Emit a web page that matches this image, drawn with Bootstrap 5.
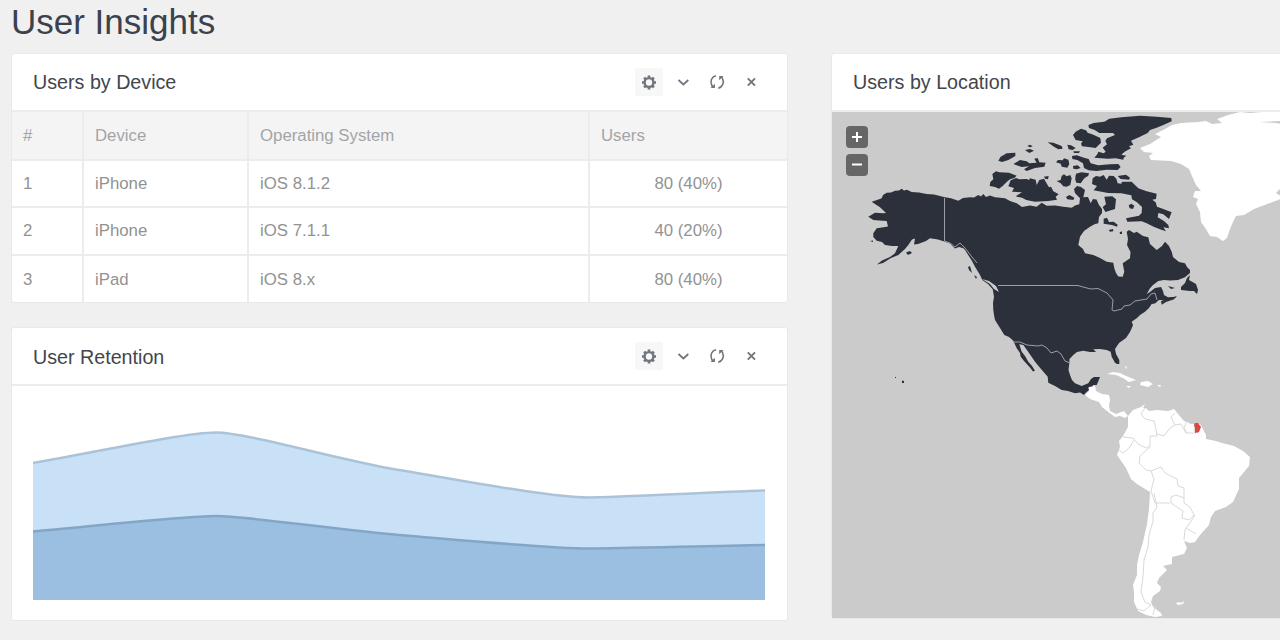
<!DOCTYPE html>
<html lang="en">
<head>
<meta charset="utf-8">
<meta name="viewport" content="width=device-width, initial-scale=1">
<title>User Insights</title>
<link href="https://cdn.jsdelivr.net/npm/bootstrap@5.3.0/dist/css/bootstrap.min.css" rel="stylesheet">
<style>
body{background:#f0f0f0;font-family:"Liberation Sans",Arial,sans-serif;color:#3d424b;height:640px;overflow:hidden}
.page-title{font-size:35px;line-height:42px;height:53px;margin:0;padding:1px 0 0 11px;font-weight:400;color:#3c424d}
.board{padding-left:11px;gap:43px}
.left-col{width:777px;gap:24px}
.right-col{width:449px}
.panel{--bs-card-border-color:#e9e9e9;--bs-card-border-radius:3px;--bs-card-inner-border-radius:2px;border-width:1px}
.panel-head{height:58px;padding:0 21px 0 21px;border-bottom:2px solid #ececec}
.panel-head h2{font-size:19.7px;margin:0;padding-top:2px;font-weight:400;color:#42464d}
.tools{gap:6px;padding-right:1px}
.tool{width:28px;height:28px;padding:0;color:#70757d;border:0;border-radius:2px;line-height:0}
.tool.on{background:#f7f7f8}
.devices{--bs-table-color:#929292;--bs-table-bg:transparent;table-layout:fixed;font-size:16.8px;line-height:22px;margin:0}
.devices th,.devices td{height:47.6px;padding:1px 11px 0;vertical-align:middle;border-style:solid;border-color:#ececec;border-width:0 2px 2px 0;font-weight:400}
.devices th{background:#f4f4f4;color:#a3a4a7}
.devices tr>:last-child{border-right:0}
.devices tbody tr:last-child td{border-bottom:0}
.chart-area{padding:15px 21px 20px;height:234px}
.map-area{background:#cbcbcb;height:506px;overflow:hidden}
.zoomers{position:absolute;left:14px;top:72px;gap:6px}
.zoomers button{width:22px;height:22px;padding:0;border:0;border-radius:4px;background:#666;line-height:0}
svg{display:block}
</style>
</head>
<body>
<h1 class="page-title">User Insights</h1>
<svg width="0" height="0" class="position-absolute">
<defs>
<symbol id="gear" viewBox="0 0 28 28"><circle cx="14" cy="14.5" r="4.4" fill="none" stroke="currentColor" stroke-width="2.4"/><g stroke="currentColor" stroke-width="2.7"><path d="M14 7.5v2.3M14 19.2v2.3M7 14.5h2.3M18.7 14.5H21M9.1 9.6l1.7 1.7M17.2 17.7l1.7 1.7M18.9 9.6l-1.7 1.7M10.8 17.7l-1.7 1.7"/></g></symbol>
<symbol id="chevron" viewBox="0 0 28 28"><path d="M9.500 12l4.900 4.500 4.900-4.500" fill="none" stroke="currentColor" stroke-width="1.700"/></symbol>
<symbol id="refresh" viewBox="0 0 28 28"><path d="M13 7.8C9 8.500 6.500 13 8.800 17.500l1.200 1.700M15.200 20.200c4-.9 6.500-5.500 4.200-9.900L18.200 8.600" fill="none" stroke="currentColor" stroke-width="1.600"/><path d="M7.600 19.900h4.300v-4.200zM20.500 8.100h-4.300v4.200z" fill="currentColor"/></symbol>
<symbol id="close" viewBox="0 0 28 28"><path d="M10.800 10.300l7.200 7.400M18 10.300l-7.200 7.400" fill="none" stroke="currentColor" stroke-width="1.900"/></symbol>
</defs>
</svg>
<main class="board d-flex align-items-start">
<div class="left-col d-flex flex-column flex-shrink-0">
<section class="card panel">
<div class="panel-head d-flex align-items-center justify-content-between">
<h2>Users by Device</h2>
<div class="tools d-flex">
<button class="btn tool on" aria-label="Settings"><svg width="28" height="28"><use href="#gear"/></svg></button>
<button class="btn tool" aria-label="Collapse"><svg width="28" height="28"><use href="#chevron"/></svg></button>
<button class="btn tool" aria-label="Refresh"><svg width="28" height="28"><use href="#refresh"/></svg></button>
<button class="btn tool" aria-label="Close"><svg width="28" height="28"><use href="#close"/></svg></button>
</div>
</div>
<table class="table devices">
<colgroup><col style="width:71px"><col style="width:165px"><col style="width:341px"><col></colgroup>
<thead><tr><th>#</th><th>Device</th><th>Operating System</th><th>Users</th></tr></thead>
<tbody>
<tr><td>1</td><td>iPhone</td><td>iOS 8.1.2</td><td class="text-center">80 (40%)</td></tr>
<tr><td>2</td><td>iPhone</td><td>iOS 7.1.1</td><td class="text-center">40 (20%)</td></tr>
<tr><td>3</td><td>iPad</td><td>iOS 8.x</td><td class="text-center">80 (40%)</td></tr>
</tbody>
</table>
</section>
<section class="card panel">
<div class="panel-head d-flex align-items-center justify-content-between">
<h2>User Retention</h2>
<div class="tools d-flex">
<button class="btn tool on" aria-label="Settings"><svg width="28" height="28"><use href="#gear"/></svg></button>
<button class="btn tool" aria-label="Collapse"><svg width="28" height="28"><use href="#chevron"/></svg></button>
<button class="btn tool" aria-label="Refresh"><svg width="28" height="28"><use href="#refresh"/></svg></button>
<button class="btn tool" aria-label="Close"><svg width="28" height="28"><use href="#close"/></svg></button>
</div>
</div>
<div class="chart-area">
<svg width="732" height="199" viewBox="33 401 732 199">
<path fill="#c9e1f7" d="M33 463C94 452.500 185 432 216 432C247 432 338 460 399 470C460 480 551 498 588 498C619 498 704 492.500 765 490.500V600H33Z"/>
<path fill="none" stroke="#acc3d7" stroke-width="2.500" d="M33 463C94 452.500 185 432.500 216 432.500C247 432.500 338 460 399 470C460 480 551 497.500 588 497.500C619 497.500 704 492.500 765 490.500"/>
<path fill="#9bbfe0" d="M33 531.500C94 526 185 516 216 516C247 516 338 530 399 535C460 540 551 548.500 588 548.500C619 548.500 704 546 765 545V600H33Z"/>
<path fill="none" stroke="#84a6c6" stroke-width="2.500" d="M33 531.500C94 526 185 516 216 516C247 516 338 530 399 535C460 540 551 548.500 588 548.500C619 548.500 704 546 765 545"/>
</svg>
</div>
</section>
</div>
<section class="card panel right-col flex-shrink-0 border-end-0 rounded-end-0">
<div class="panel-head d-flex align-items-center"><h2>Users by Location</h2></div>
<div class="zoomers d-flex flex-column">
<button class="btn" aria-label="Zoom in"><svg width="22" height="22"><path d="M6 11h10M11 6v10" stroke="#fff" stroke-width="2"/></svg></button>
<button class="btn" aria-label="Zoom out"><svg width="22" height="22"><path d="M6 10.500h10" stroke="#fff" stroke-width="2"/></svg></button>
</div>
<div class="map-area">
<svg width="448" height="506" viewBox="832 112 448 506">
<!-- North American mainland -->
<path fill="#2b303a" d="M871.700 201.700L877 200L881.700 198.300L883 195L886.700 192.700L891 192.500L895 190.700L899 190.500L901.700 188.700L904 190.500L907 189.700L911.700 192L919 192.500L926.700 194L934 194.500L945 197.300L951 198.200L958.300 200.700L963 198L970 197.300L974 197.500L978.300 195L981 196.500L983.300 194L986 197L990 195.500L995 197.300L1005 198.300L1010 201L1016.700 203.300L1022 207L1030 205.500L1036.700 206.700L1041.700 202.700L1046.700 205.700L1055 205.500L1063.300 206.700L1071.700 207.700L1075 205.500L1079.300 204.300L1080 198.300L1075 193L1074 189L1077 186L1081 187L1085 190L1083.300 197.300L1088 197L1090.700 203.300L1093 199L1096.500 199.500L1099 205L1102 209L1102 213L1099 217L1098.300 223.300L1095 224L1090 226.700L1084 231L1080 236.700L1078.300 245L1083 249L1085 253.300L1093.300 255L1100 258L1106.700 261.700L1113.300 262.700L1114.300 268.300L1116 273L1118.300 276.500L1122.700 276.700L1124.300 271.700L1122.700 263.300L1126 261L1130 258.300L1130.500 252L1127 245L1128 239L1126.700 231.700L1129 230L1134 233L1136.700 231.700L1143 236L1148.300 237.300L1150 244L1156.700 250L1162 246L1165 241.700L1169 246L1171.700 251.700L1173 257L1179 262L1185 263.300L1187 267L1190 270L1190 273L1185 277.300L1178 280L1170 280.500L1164 280L1158.300 281L1153 285L1150 288.300L1146.700 294L1150 292L1155 288L1161 287L1163 291L1164 295L1168 297.300L1176.700 296.700L1172 300L1166 302L1161.700 304.700L1161 301L1164 300L1159 300L1155 303.500L1151.700 304L1149 308L1145 311.700L1140 315L1137 318L1131.700 321.700L1133 325L1131.700 328.300L1130 332L1126 338L1119 343L1115 349L1116 354L1119.300 360L1119.300 364L1117 364L1115 362.700L1111.700 356.700L1110.700 351.700L1106.700 350L1100 349L1093.300 349.300L1096 352L1090 352L1083.300 350.700L1077 352L1073.300 355L1069.500 359L1069.300 363.300L1068.500 370L1070 375L1072 380L1075 383.300L1081.700 386L1088.300 383.300L1091 379L1094 377L1100 377L1098 382L1096.700 385L1093 385L1092 387.500L1088 387.500L1089 390L1085.500 393L1084 395L1080 392.500L1075 393.300L1068 391L1061.700 390L1055 386L1048.300 382.700L1047.700 376.700L1041 369L1035 361.700L1029 353L1023.300 345L1019.300 344.300L1021.700 351.700L1025 356L1028.300 361.700L1032 366L1035 370.700L1033 371.500L1030 367.500L1024 361L1020.700 356.700L1020 353L1016.700 348.300L1013.300 340.700L1009 337L1004.300 335L1000 328L995 320L994 315L993.300 310L993 303L994 296.700L992.700 289.300L988 284L982.300 280L980 275L975 266.700L972 261L965 250L963.300 248.300L959 247L955 248.500L950 243.500L945 241.700L938 239.500L930 238.300L926 241L918 244L914 244.500L915 238.500L912 239.500L908.300 245L905 249L898.300 255L891 258L883 263L877 264.500L882 260.500L890 257L895 253.300L898.300 246L892 246L885 245L882 242L876.700 240.700L873.300 237L873.300 233.300L876.700 228.300L882 227.500L888 226.500L886.700 221L879 220.500L873.300 220L868.300 216.700L875 212.700L883.300 213.300L886 213L880 207.300L875 204Z"/>
<!-- Arctic islands: enlarged 3x local units -->
<g fill="#2b303a" transform="translate(980 110) scale(.33333)">
<path d="M55 152L62 140L80 130L106 128L106 138L85 150L66 156ZM135 120L150 117L162 122L148 129ZM142 108L150 104L158 109L150 112ZM203 97L220 98L245 108L248 116L235 118L222 110ZM262 104L273 106L287 114L278 120L266 118ZM280 124L300 124L297 129L282 129ZM100 162L120 150L140 154L148 160L170 158L163 146L173 144L178 157L197 158L193 170L165 174L140 183L132 178L147 169L125 171ZM228 157L234 150L248 151L252 145L265 149L268 162L262 173L245 170L242 161ZM279 168L293 166L302 174L290 178L280 176ZM276 138L290 136L312 143L326 147L332 160L355 166L390 163L415 162L422 171L413 180L380 179L350 183L326 181L312 174L309 160L292 150L277 147Z"/>
<path d="M37 192L48 184L58 187L87 188L110 197L103 204L90 208L80 216L68 228L57 236L45 231L29 228L31 216L40 208ZM85 229L92 211L108 204L118 208L140 207L147 210L150 205L167 209L170 225L178 210L192 206L201 222L207 232L213 230L220 244L236 253L227 260L231 269L205 273L165 275L139 270L126 263L107 259L126 247L96 245L102 234ZM192 200L206 198L204 208L195 206ZM230 213L242 210L245 198L252 193L260 199L271 195L275 205L271 225L260 230L250 229L242 220ZM286 201L288 191L304 187L327 190L325 197L313 205L302 220L289 218L286 209ZM258 261L268 255L283 263L280 270L262 268Z"/>
<path d="M279 75L287 65L303 56L318 61L323 68L340 74L361 84L363 98L347 114L325 111L306 109L303 101L308 94L287 90ZM325 45L341 39L373 35L388 26L424 22L480 17L530 20L574 24L575 34L550 45L530 53L510 60L503 69L477 82L453 92L460 104L447 109L453 115L434 125L424 134L439 137L431 143L430 149L407 145L383 146L343 143L352 133L355 125L371 130L377 125L368 113L381 103L376 93L381 85L405 75L399 69L358 69L344 60L327 54Z"/>
<path d="M336 222L338 205L348 198L360 200L371 195L380 209L387 197L401 198L409 206L413 220L424 221L426 215L455 215L475 235L500 244L530 251L528 267L517 269L527 277L531 290L550 297L575 307L567 327L550 313L535 309L533 322L552 333L565 345L567 355L550 352L558 364L540 358L521 350L500 340L485 334L442 335L438 325L477 317L485 309L486 291L470 276L456 268L454 256L424 250L384 249L341 241L351 228ZM413 198L438 194L450 203L447 209L422 207ZM373 260L397 259L408 268L405 297L388 302L376 306L368 291L378 283ZM446 286L454 281L463 287L459 297L449 295ZM371 326L381 323L387 336L401 335L413 344L411 350L396 345L371 341ZM386 360L399 357L400 364L390 365ZM419 367L426 364L426 372L420 372Z"/>
</g>
<g fill="#2b303a">
<path d="M1169 302L1172 302M1190 275L1189 280L1196 284L1198 290L1197 294L1194 291L1190 291L1181 290L1181 287L1185 283L1187 278ZM1168 286L1175 288L1171 289ZM1171 298L1177 296L1173 300ZM906 252.500L910 251L912 253L908 255ZM870 241L873 240.500L873 242ZM968 267L970 266L972 273L969 270ZM974 275L977 277L976 279ZM902 380.500L904 381L904 383L902 383ZM895 377h1v1h-1z"/>
</g>
<!-- water inlets and international borders -->
<path fill="#cbcbcb" d="M982 279L989 281L996 286L999 292L994 289L990 284Z"/>
<g fill="none" stroke="#9b9ea3" stroke-width="1">
<path d="M944.500 198V241L950 243L955 247L960 243L965 248L972 257L977 263M998 285.500H1078L1083 287L1091 289L1098 288.500L1107 293L1113 300L1112 310L1114 311L1122 309L1124 306L1130 305L1135 301L1147 299L1151 294L1155 293L1157 300M1013.300 342L1020 342L1027 345L1038 346L1042 345L1047 348L1051 353L1057 351L1061 354L1065 361L1070 363"/>
</g>
<!-- Greenland -->
<path fill="#fff" d="M1140 148L1150 144L1161 137L1155 134L1165 129L1172 125L1181 123L1198 122L1206 121L1212 124L1222 123L1217 119L1228 115L1240 112H1281V199L1270 203L1262 206L1254 209L1244 215L1236 216L1233 222L1230 229L1227 238L1223 241L1217 237L1210 236L1206 229L1201 222L1200 212L1196 204L1198 199L1193 197L1195 191L1201 191L1196 185L1192 176L1189 169L1181 164L1171 161L1151 160L1149 156L1153 153L1144 152Z"/>
<path fill="#cbcbcb" d="M1260 122L1276 123L1281 124V121ZM1281 188L1276 193L1281 196ZM1240 112L1250 113L1262 112Z"/>
<!-- Central America and Caribbean -->
<path fill="#fff" d="M1085 395L1089 391L1089 387L1095 386L1096 391L1102 394L1109 395L1110 400L1109 406L1110 411L1116 414L1124 411L1128 416L1125 418L1120 416L1115 417L1107 411L1102 407L1099 402L1090 399ZM1107 374L1113 372L1120 373L1126 376L1136 380L1129 382L1123 378L1116 375ZM1126 386L1131 386L1129 388ZM1141 382L1148 381L1153 384L1148 387L1140 385ZM1157 385L1161 385L1160 387ZM1125 366l2 1-1 2ZM1176 603L1179 602L1181 603L1184 601L1183 604L1178 605Z"/>
<!-- South America -->
<path fill="#fff" d="M1128 416L1133 410L1141 407L1145 404L1143 408L1146 408L1149 411L1157 410L1168 411L1174 409L1178 414L1184 421L1191 424L1200 424L1203 429L1206 435L1206 439L1216 441L1222 443L1234 446L1243 451L1250 457L1249 466L1244 472L1239 478L1239 489L1233 502L1226 507L1215 511L1211 517L1209 525L1200 535L1195 542L1190 543L1184 541L1187 548L1184 554L1172 557L1172 564L1163 566L1167 570L1159 578L1157 583L1161 587L1160 591L1153 596L1151 602L1153 607L1161 613L1162 616L1155 617L1146 615L1138 611L1134 602L1134 592L1133 585L1137 575L1137 565L1139 555L1143 542L1147 524L1149 509L1150 492L1137 484L1131 479L1126 468L1117 455L1120 447L1119 441L1123 436L1128 427Z"/>
<g fill="none" stroke="#d9d9d9" stroke-width="1">
<path d="M1145 408L1141 414L1145 419L1154 421L1156 429L1157 436L1150 436L1150 446L1146 448L1138 444L1133 438L1123 437M1134 440L1130 447L1123 453L1119 450M1150 447L1140 456L1139 463L1146 470L1151 471L1161 467L1165 473L1177 479L1178 486L1184 488L1184 503L1190 507L1194 515L1189 520L1182 518L1183 511L1171 503L1171 497L1176 495L1184 498M1151 471L1154 479L1151 491L1155 503L1160 503L1170 503M1154 493L1157 507L1153 513L1153 521L1149 535L1148 547L1144 560L1143 577L1141 592L1145 602L1151 605L1144 611L1137 609M1155 606L1153 615M1195 515L1189 524L1185 530L1184 540M1186 528L1196 534M1157 434L1164 436L1170 428L1175 425L1171 417L1175 413M1175 425L1181 424L1186 433L1196 433M1186 423L1184 428L1187 433M1195 424L1194 431L1199 433"/>
</g>
<path fill="#dd473c" d="M1195 423L1198 423L1201 427L1199 432L1195 433L1195 428L1194 425Z"/>
</svg>
</div>
</section>
</main>
<script src="https://cdn.jsdelivr.net/npm/bootstrap@5.3.0/dist/js/bootstrap.bundle.min.js"></script>
</body>
</html>
